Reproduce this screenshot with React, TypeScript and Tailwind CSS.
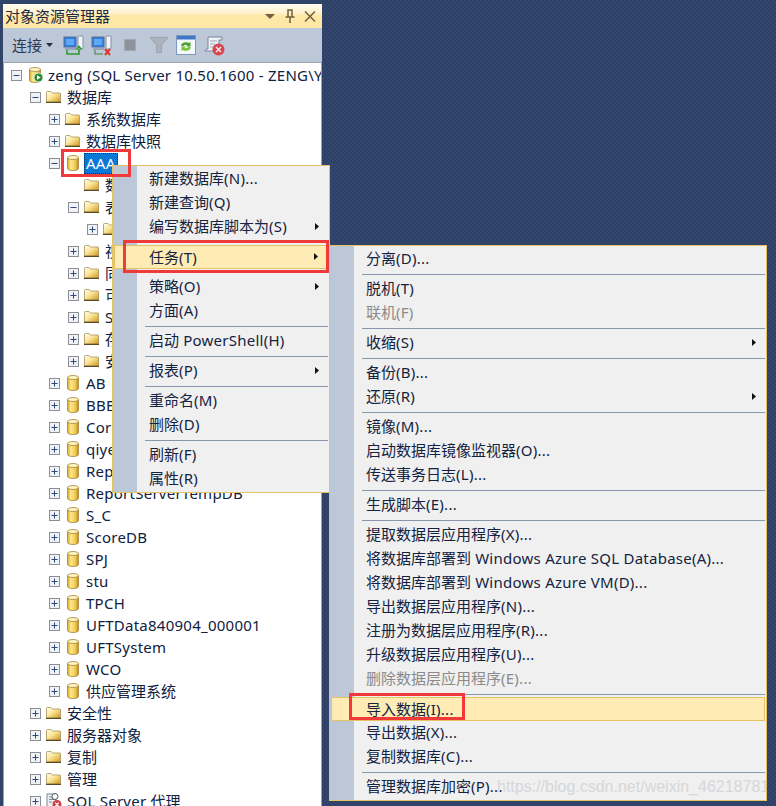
import { useId } from 'react'

type Kind = 'folder' | 'db' | 'server' | 'agent'
type Row = { level: number; box?: '+' | '-'; icon: Kind; label: string; selected?: boolean }

const rows: Row[] = [
  { level: 0, box: '-', icon: 'server', label: 'zeng (SQL Server 10.50.1600 - ZENG\\Y)' },
  { level: 1, box: '-', icon: 'folder', label: '数据库' },
  { level: 2, box: '+', icon: 'folder', label: '系统数据库' },
  { level: 2, box: '+', icon: 'folder', label: '数据库快照' },
  { level: 2, box: '-', icon: 'db', label: 'AAA', selected: true },
  { level: 3, icon: 'folder', label: '数据库关系图' },
  { level: 3, box: '-', icon: 'folder', label: '表' },
  { level: 4, box: '+', icon: 'folder', label: '系统表' },
  { level: 3, box: '+', icon: 'folder', label: '视图' },
  { level: 3, box: '+', icon: 'folder', label: '同义词' },
  { level: 3, box: '+', icon: 'folder', label: '可编程性' },
  { level: 3, box: '+', icon: 'folder', label: 'Service Broker' },
  { level: 3, box: '+', icon: 'folder', label: '存储' },
  { level: 3, box: '+', icon: 'folder', label: '安全性' },
  { level: 2, box: '+', icon: 'db', label: 'AB' },
  { level: 2, box: '+', icon: 'db', label: 'BBB' },
  { level: 2, box: '+', icon: 'db', label: 'Cordb' },
  { level: 2, box: '+', icon: 'db', label: 'qiye' },
  { level: 2, box: '+', icon: 'db', label: 'ReportServer' },
  { level: 2, box: '+', icon: 'db', label: 'ReportServerTempDB' },
  { level: 2, box: '+', icon: 'db', label: 'S_C' },
  { level: 2, box: '+', icon: 'db', label: 'ScoreDB' },
  { level: 2, box: '+', icon: 'db', label: 'SPJ' },
  { level: 2, box: '+', icon: 'db', label: 'stu' },
  { level: 2, box: '+', icon: 'db', label: 'TPCH' },
  { level: 2, box: '+', icon: 'db', label: 'UFTData840904_000001' },
  { level: 2, box: '+', icon: 'db', label: 'UFTSystem' },
  { level: 2, box: '+', icon: 'db', label: 'WCO' },
  { level: 2, box: '+', icon: 'db', label: '供应管理系统' },
  { level: 1, box: '+', icon: 'folder', label: '安全性' },
  { level: 1, box: '+', icon: 'folder', label: '服务器对象' },
  { level: 1, box: '+', icon: 'folder', label: '复制' },
  { level: 1, box: '+', icon: 'folder', label: '管理' },
  { level: 1, box: '+', icon: 'agent', label: 'SQL Server 代理' },
]

type Item = { label?: string; arrow?: boolean; off?: boolean; hot?: boolean }

const dbMenu: Item[] = [
  { label: '新建数据库(N)...' },
  { label: '新建查询(Q)' },
  { label: '编写数据库脚本为(S)', arrow: true },
  {},
  { label: '任务(T)', arrow: true, hot: true },
  {},
  { label: '策略(O)', arrow: true },
  { label: '方面(A)' },
  {},
  { label: '启动 PowerShell(H)' },
  {},
  { label: '报表(P)', arrow: true },
  {},
  { label: '重命名(M)' },
  { label: '删除(D)' },
  {},
  { label: '刷新(F)' },
  { label: '属性(R)' },
]

const taskMenu: Item[] = [
  { label: '分离(D)...' },
  {},
  { label: '脱机(T)' },
  { label: '联机(F)', off: true },
  {},
  { label: '收缩(S)', arrow: true },
  {},
  { label: '备份(B)...' },
  { label: '还原(R)', arrow: true },
  {},
  { label: '镜像(M)...' },
  { label: '启动数据库镜像监视器(O)...' },
  { label: '传送事务日志(L)...' },
  {},
  { label: '生成脚本(E)...' },
  {},
  { label: '提取数据层应用程序(X)...' },
  { label: '将数据库部署到 Windows Azure SQL Database(A)...' },
  { label: '将数据库部署到 Windows Azure VM(D)...' },
  { label: '导出数据层应用程序(N)...' },
  { label: '注册为数据层应用程序(R)...' },
  { label: '升级数据层应用程序(U)...' },
  { label: '删除数据层应用程序(E)...', off: true },
  {},
  { label: '导入数据(I)...', hot: true },
  { label: '导出数据(X)...' },
  { label: '复制数据库(C)...' },
  {},
  { label: '管理数据库加密(P)...' },
]

// latin runs are a touch wider in the original font, chinese is not
function Label({ text }: { text: string }) {
  return (
    <>
      {text.split(/([\x20-\x7e]+)/).map((part, i) =>
        i % 2 ? (
          <span key={i} className="tracking-[0.25px]">
            {part}
          </span>
        ) : (
          part
        ),
      )}
    </>
  )
}

function FolderIcon() {
  const id = useId()
  return (
    <svg width="15" height="12" viewBox="0 0 15 12" className="shrink-0">
      <defs>
        <linearGradient id={id} x1="0" y1="0" x2="1" y2="1">
          <stop offset="0" stopColor="#fffdf0" />
          <stop offset="0.45" stopColor="#fbe596" />
          <stop offset="1" stopColor="#d0961a" />
        </linearGradient>
      </defs>
      <path d="M0.500 11V1.500q0-1 1-1h3.500l1.500 1.500h7.500q.5 0 .5 1V11z" fill={`url(#${id})`} stroke="#a8925a" strokeWidth="0.800" />
      <path d="M0 11.400h15" stroke="#5a4a24" strokeWidth="1.200" />
    </svg>
  )
}

function DbIcon({ running }: { running?: boolean }) {
  const id = useId()
  return (
    <svg width="12" height="16" viewBox="0 0 12 16" className="ml-[2px] shrink-0 overflow-visible">
      <defs>
        <linearGradient id={id} x1="0" y1="0" x2="1" y2="0">
          <stop offset="0" stopColor="#d8a52c" />
          <stop offset="0.3" stopColor="#fbe88e" />
          <stop offset="0.7" stopColor="#f3cc52" />
          <stop offset="1" stopColor="#b9861c" />
        </linearGradient>
      </defs>
      <path d="M0.500 2.500v11c0 1.300 2.500 2 5.500 2s5.500-.7 5.500-2v-11z" fill={`url(#${id})`} stroke="#a9863e" strokeWidth="0.800" />
      <ellipse cx="6" cy="2.500" rx="5.500" ry="2" fill="#fdf3c0" stroke="#a9863e" strokeWidth="0.800" />
      {running && (
        <g>
          <circle cx="9.500" cy="10.500" r="4.500" fill="#2f8a3a" stroke="#fff" strokeWidth="0.800" />
          <path d="M8 8.200v4.600l3.600-2.300z" fill="#fff" />
        </g>
      )}
    </svg>
  )
}

function AgentIcon() {
  return (
    <svg width="16" height="16" viewBox="0 0 16 16" className="shrink-0">
      <rect x="1" y="1" width="9" height="13" fill="#eef0f4" stroke="#7d8798" />
      <path d="M3 4h5M3 6.500h5M3 9h3" stroke="#7d8798" />
      <circle cx="9" cy="3.500" r="3" fill="#fff" stroke="#555" />
      <circle cx="11" cy="11.500" r="4.500" fill="#d23d45" />
      <path d="M9.200 9.700l3.600 3.600M12.800 9.700l-3.600 3.600" stroke="#fff" strokeWidth="1.200" />
    </svg>
  )
}

function TreeIcon({ kind }: { kind: Kind }) {
  if (kind === 'folder') return <FolderIcon />
  if (kind === 'agent') return <AgentIcon />
  return <DbIcon running={kind === 'server'} />
}

function ExpandBox({ kind }: { kind: '+' | '-' }) {
  return (
    <svg width="11" height="11" viewBox="0 0 11 11" className="shrink-0">
      <rect x="0.500" y="0.500" width="10" height="10" fill="#f1f2f5" stroke="#8d8f96" />
      <path d="M2.500 5.500h6" stroke="#2d4a80" />
      {kind === '+' && <path d="M5.500 2.500v6" stroke="#2d4a80" />}
    </svg>
  )
}

function TreeRow({ row }: { row: Row }) {
  return (
    <div className="flex h-[22px] items-center whitespace-nowrap" style={{ paddingLeft: 7 + row.level * 19 }}>
      <div className="flex w-[16px] shrink-0 items-center">{row.box && <ExpandBox kind={row.box} />}</div>
      <div className="flex w-[21px] shrink-0 items-center">
        <TreeIcon kind={row.icon} />
      </div>
      <span
        className={
          row.selected
            ? '-ml-[2px] border border-dotted border-[#1c2a44] bg-[#0a78d7] px-px leading-[19px] text-white'
            : 'text-[#10203f]'
        }
      >
        <Label text={row.label} />
      </span>
    </div>
  )
}

function MonitorIcon({ badge }: { badge: 'up' | 'x' }) {
  return (
    <svg width="21" height="21" viewBox="0 0 21 21">
      <rect x="1" y="2" width="12" height="10" fill="#2c7fe8" stroke="#5d6f8e" />
      <rect x="3" y="4" width="8" height="6" fill="#5fa8f5" />
      <path d="M2 13h11v2H2z" fill="#9aa6b8" />
      <rect x="15" y="1" width="5" height="13" rx="1" fill="#f2f4f7" stroke="#8592a5" />
      {badge === 'up' ? (
        <path d="M4 15v4h12v-5M13.500 14.500l2.500-3 2.500 3" fill="none" stroke="#2f9a2e" strokeWidth="1.600" />
      ) : (
        <g>
          <path d="M4 15v4h8" fill="none" stroke="#6c9a6a" strokeWidth="1.600" />
          <path d="M14 14l5 6M19 14l-5 6" stroke="#e0392b" strokeWidth="2" />
        </g>
      )}
    </svg>
  )
}

function Toolbar() {
  return (
    <div className="flex h-[34px] shrink-0 items-center bg-[#bcc7d8] pl-[9px] text-[#2a3a55]">
      <span>连接</span>
      <svg width="7" height="4" viewBox="0 0 7 4" className="ml-[4px] mr-[10px]">
        <path d="M0 0h7L3.500 4z" fill="#22304a" />
      </svg>
      <div className="flex items-center gap-[7px]">
        <MonitorIcon badge="up" />
        <MonitorIcon badge="x" />
        <div className="ml-[5px] mr-[2px] h-[12px] w-[12px] border border-[#a3a8b0] bg-[#8e939b]" />
        <svg width="20" height="20" viewBox="0 0 21 20" className="ml-[4px]">
          <path d="M1 2h19l-7 8v8h-5v-8z" fill="#adb3bc" stroke="#9aa0a9" />
        </svg>
        <svg width="20" height="20" viewBox="0 0 20 20">
          <rect x="0.500" y="0.500" width="19" height="19" fill="#f4f8fc" stroke="#7e97bd" />
          <rect x="1" y="1" width="18" height="3.500" fill="#3f78c6" />
          <path d="M5 11a5 4 0 0 1 8-3l1.500-1v4.500H10l1.500-1a2.800 2.300 0 0 0-4 .5z" fill="#4aa02c" />
          <path d="M15 12a5 4 0 0 1-8 3l-1.500 1v-4.500H10l-1.500 1a2.800 2.300 0 0 0 4-.5z" fill="#7cc23c" />
        </svg>
        <svg width="21" height="21" viewBox="0 0 21 21" className="ml-[1px]">
          <path d="M4 2h14v3h-3v11H1c0-2 2-2 3-2z" fill="#eef1f5" stroke="#7a8698" />
          <path d="M6 6h7M6 9h5M6 12h3" stroke="#9aa5b5" />
          <circle cx="14.500" cy="14.500" r="6" fill="#d5474f" />
          <path d="M12 12l5 5M17 12l-5 5" stroke="#fbe6e6" strokeWidth="1.500" />
        </svg>
      </div>
    </div>
  )
}

function TitleBar() {
  return (
    <div className="flex h-[24px] shrink-0 items-center justify-between rounded-t-[2px] bg-[linear-gradient(#fffcf0_0%,#fff3cf_35%,#ffe8a6_50%,#ffe8a6_100%)] pl-[2px] pr-[6px] text-[#1c2a44]">
      <span>对象资源管理器</span>
      <div className="flex items-center text-[#6e6240]">
        <svg width="10" height="5" viewBox="0 0 10 5" className="mr-[10px]">
          <path d="M0 0h10L5 5z" fill="currentColor" />
        </svg>
        <svg width="10" height="14" viewBox="0 0 10 14" className="mr-[9px]">
          <path d="M3 1h4v7H3zM0.500 8h9M5 8v6" fill="none" stroke="currentColor" strokeWidth="1.500" />
        </svg>
        <svg width="12" height="11" viewBox="0 0 12 11">
          <path d="M1 .5l10 10M11 .5l-10 10" stroke="currentColor" strokeWidth="1.500" />
        </svg>
      </div>
    </div>
  )
}

function Menu({ items, className }: { items: Item[]; className: string }) {
  return (
    <div className={`absolute border border-[#e5c365] bg-[#f0f0f0] py-[1px] ${className}`}>
      <div className="absolute bottom-0 left-0 top-0 w-[24px] bg-[#bcc7d8]" />
      {items.map((item, i) =>
        item.label ? (
          <div
            key={i}
            className={
              item.hot
                ? 'relative mx-px flex h-[24px] items-center justify-between border border-[#e5c365] bg-[#ffecb5] pb-[1px] pl-[34px] pr-[9px]'
                : 'relative flex h-[24px] items-center justify-between pb-[2px] pl-[36px] pr-[10px]'
            }
          >
            <span className={item.off ? 'whitespace-nowrap text-[#8a8a8a]' : 'whitespace-nowrap text-[#14233f]'}>
              <Label text={item.label} />
            </span>
            {item.arrow && (
              <svg width="4" height="7" viewBox="0 0 4 7">
                <path d="M0 0l4 3.500L0 7z" fill="#111" />
              </svg>
            )}
          </div>
        ) : (
          <div key={i} className="relative flex h-[6px] items-center pl-[32px] pr-px">
            <div className="h-px w-full bg-[#8996ab]" />
          </div>
        ),
      )}
    </div>
  )
}

export default function App() {
  return (
    <div className="relative h-[806px] w-[776px] overflow-hidden bg-[repeating-conic-gradient(#2e4066_0_25%,#33466c_0_50%)] bg-[length:4px_4px] pl-[3px] pt-[4px] font-['Noto_Sans','Noto_Sans_CJK_SC',sans-serif] text-[15px] leading-[22px]">
      <div className="flex h-[802px] w-[319px] flex-col bg-white">
        <TitleBar />
        <Toolbar />
        <div className="flex-1 overflow-hidden border-x border-t border-[#9aa3b2] pt-[1px]">
          {rows.map((row, i) => (
            <TreeRow key={i} row={row} />
          ))}
        </div>
      </div>

      <Menu items={dbMenu} className="left-[112px] top-[165px] w-[218px]" />
      <Menu items={taskMenu} className="left-[329px] top-[245px] w-[438px]" />

      {/* red highlight marks are drawn over everything */}
      <div className="absolute left-[61px] top-[149px] h-[28px] w-[70px] border-[3px] border-[#f03a3a]" />
      <div className="absolute left-[123px] top-[240px] h-[33px] w-[206px] border-[3px] border-[#f03a3a]" />
      <div className="absolute left-[349px] top-[693px] h-[27px] w-[116px] border-[3px] border-[#f03a3a]" />

      <div className="absolute left-[497px] top-[776px] w-[269px] overflow-hidden whitespace-nowrap font-['Liberation_Sans',sans-serif] text-[16px] text-[#d6d7d9]">
        https://blog.csdn.net/weixin_46218781
      </div>
    </div>
  )
}
